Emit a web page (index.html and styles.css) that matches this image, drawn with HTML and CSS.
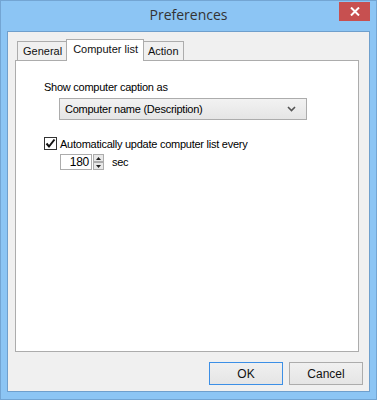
FILE: index.html
```html
<!DOCTYPE html>
<html>
<head>
    <meta charset="utf-8">
    <title>Preferences</title>
    <link rel="stylesheet" href="styles.css">
</head>
<body>
    <div class="window">
        <div class="titlebar">
            <span></span>
            <div class="title">Preferences</div>
            <div class="close">
                <svg width="10" height="9" viewBox="0 0 10 9">
                    <path d="M1 0.5 L9 8.5 M9 0.5 L1 8.5" stroke="#fff" stroke-width="2"/>
                </svg>
            </div>
        </div>
        <div class="client">
            <div class="tabs">
                <div class="tab">General</div>
                <div class="tab active">Computer list</div>
                <div class="tab">Action</div>
            </div>
            <div class="panel">
                <div class="label">Show computer caption as</div>
                <div class="select">
                    <span>Computer name (Description)</span>
                    <svg width="9" height="6" viewBox="0 0 9 6">
                        <path d="M1 1 L4.5 4.5 L8 1" stroke="#555" stroke-width="1.6" fill="none"/>
                    </svg>
                </div>
                <div class="check-row">
                    <div class="checkbox">
                        <svg width="11" height="11" viewBox="0 0 11 11">
                            <path d="M1.5 5.5 L4 8.5 L9.5 1.5" stroke="#111" stroke-width="2" fill="none"/>
                        </svg>
                    </div>
                    <span>Automatically update computer list every</span>
                </div>
                <div class="spin-row">
                    <div class="spin-input">180</div>
                    <div class="spin-btns">
                        <div class="spin-btn"><svg width="5" height="3" viewBox="0 0 5 3"><path d="M0 3 L2.5 0 L5 3Z" fill="#222"/></svg></div>
                        <div class="spin-btn"><svg width="5" height="3" viewBox="0 0 5 3"><path d="M0 0 L2.5 3 L5 0Z" fill="#222"/></svg></div>
                    </div>
                    <span class="unit">sec</span>
                </div>
            </div>
            <div class="buttons">
                <button class="btn default">OK</button>
                <button class="btn">Cancel</button>
            </div>
        </div>
    </div>
</body>
</html>
```
FILE: styles.css
```css
* {
    margin: 0;
    padding: 0;
    box-sizing: border-box;
}

body {
    font-family: "Liberation Sans", Arial, sans-serif;
    font-size: 11px;
    letter-spacing: -0.25px;
    color: #000;
    background: #fff;
}

.window {
    width: 377px;
    height: 400px;
    border: 1px solid #73a5d3;
    background: #8cc5f4;
    display: flex;
    flex-direction: column;
    padding: 0 6px 7px 6px;
}

.titlebar {
    height: 30px;
    display: grid;
    grid-template-columns: 1fr auto 1fr;
    align-items: start;
}

.title {
    font-family: "Open Sans", sans-serif;
    font-size: 14px;
    letter-spacing: 0;
    color: #333;
    padding-top: 4px;
}

.close {
    justify-self: end;
    width: 31px;
    height: 19px;
    margin-top: 1px;
    background: #c75050;
    display: flex;
    align-items: center;
    justify-content: center;
}

.client {
    flex: 1;
    background: #f0f0f0;
    border: 1px solid #6f9fcc;
    display: flex;
    flex-direction: column;
    padding: 7px 10px 0 7px;
}

.tabs {
    display: flex;
    align-items: flex-end;
    height: 21px;
    padding-left: 3px;
}

.tab {
    height: 19px;
    padding: 3px 4px 0 5px;
    border: 1px solid #acacac;
    border-bottom: none;
    background: #f0f0f0;
    font-size: 11px;
    letter-spacing: 0;
    color: #111;
    margin-left: -1px;
}

.tab.active {
    height: 22px;
    background: #fff;
    padding: 3px 5px 0 6px;
    position: relative;
    margin-bottom: -1px;
    margin-right: -1px;
    z-index: 1;
}

.panel {
    height: 292px;
    background: #fff;
    border: 1px solid #acacac;
    padding: 19px 0 0 28px;
}

.label {
    line-height: 14px;
}

.select {
    width: 248px;
    height: 22px;
    margin: 4px 0 0 15px;
    border: 1px solid #acacac;
    background: linear-gradient(#f2f2f2, #e5e5e5);
    display: flex;
    align-items: center;
    justify-content: space-between;
    padding: 0 10px 0 5px;
}

.check-row {
    display: flex;
    align-items: center;
    gap: 3px;
    margin-top: 17px;
}

.checkbox {
    width: 13px;
    height: 13px;
    border: 1px solid #333;
    background: #fff;
    display: flex;
    align-items: center;
    justify-content: center;
}

.spin-row {
    display: flex;
    align-items: center;
    margin: 4px 0 0 16px;
}

.spin-input {
    width: 32px;
    height: 16px;
    border: 1px solid #acacac;
    text-align: right;
    padding-right: 2px;
    line-height: 14px;
    font-size: 12px;
}

.spin-btns {
    width: 11px;
    height: 16px;
    display: flex;
    flex-direction: column;
    margin-left: 1px;
}

.spin-btn {
    flex: 1;
    border: 1px solid #acacac;
    background: #e8e8e8;
    display: flex;
    align-items: center;
    justify-content: center;
}

.unit {
    margin-left: 8px;
}

.buttons {
    display: flex;
    justify-content: flex-end;
    gap: 6px;
    margin: 10px -4px 0 0;
}

.btn {
    width: 74px;
    height: 23px;
    border: 1px solid #acacac;
    background: linear-gradient(#f0f0f0, #e5e5e5);
    font-family: "Liberation Sans", Arial, sans-serif;
    font-size: 12px;
    color: #111;
}

.btn.default {
    border-color: #3c8fe6;
}
```
